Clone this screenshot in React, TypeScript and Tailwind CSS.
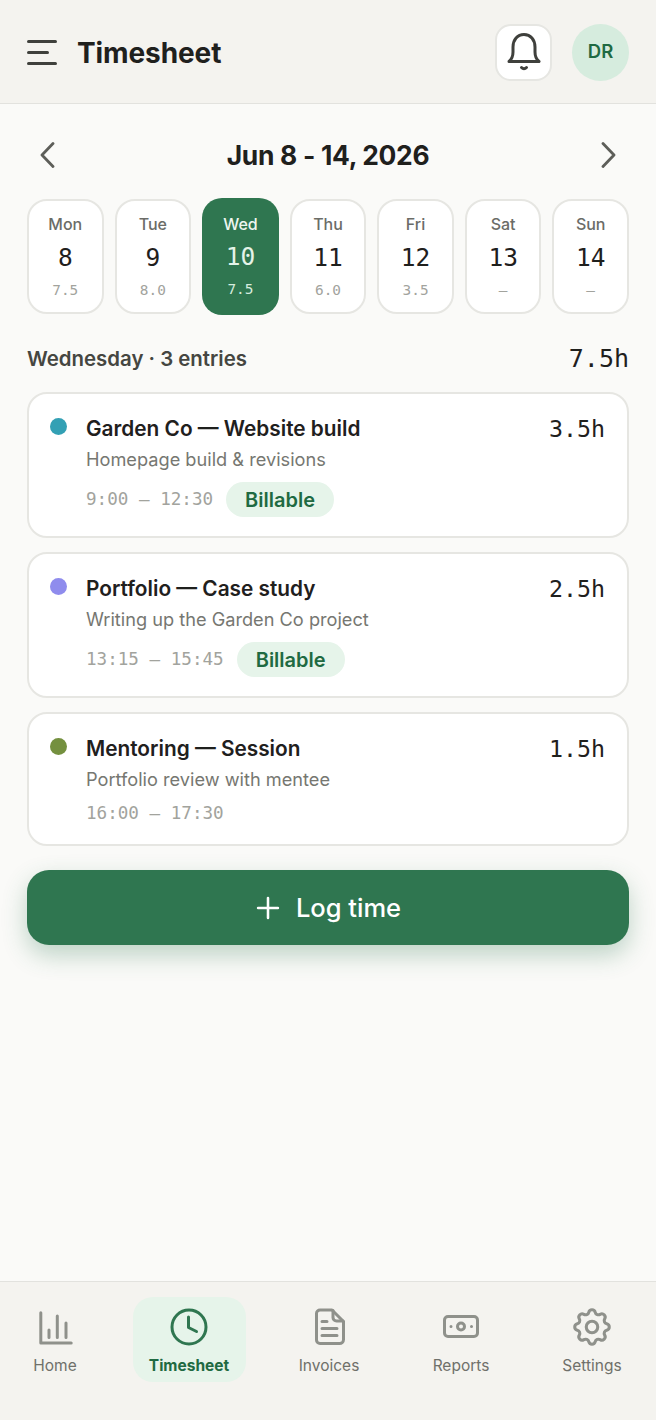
import React from "react";
import { Plus } from "lucide-react";
import { TbSettings } from "react-icons/tb";

const sans = "font-['Inter','Noto_Sans',sans-serif]";
const mono = "font-['DejaVu_Sans_Mono','Liberation_Mono',monospace]";

interface Day {
  name: string;
  num: string;
  hours: string;
  active?: boolean;
}

const days: Day[] = [
  { name: "Mon", num: "8", hours: "7.5" },
  { name: "Tue", num: "9", hours: "8.0" },
  { name: "Wed", num: "10", hours: "7.5", active: true },
  { name: "Thu", num: "11", hours: "6.0" },
  { name: "Fri", num: "12", hours: "3.5" },
  { name: "Sat", num: "13", hours: "—" },
  { name: "Sun", num: "14", hours: "—" },
];

interface Entry {
  title: string;
  note: string;
  time: string;
  hours: string;
  dot: string;
  billable: boolean;
}

const entries: Entry[] = [
  { title: "Garden Co — Website build", note: "Homepage build & revisions", time: "9:00 – 12:30", hours: "3.5h", dot: "bg-[#33a0b4]", billable: true },
  { title: "Portfolio — Case study", note: "Writing up the Garden Co project", time: "13:15 – 15:45", hours: "2.5h", dot: "bg-[#8f8ced]", billable: true },
  { title: "Mentoring — Session", note: "Portfolio review with mentee", time: "16:00 – 17:30", hours: "1.5h", dot: "bg-[#74903f]", billable: false },
];

const BellIcon = () => (
  <svg width="38" height="40" viewBox="0 0 38 40" fill="none" stroke="#3f403c" strokeWidth="3" strokeLinecap="round" strokeLinejoin="round">
    <path d="M4 29.500c3-2.500 4-5 4-9.500v-5C8 7.500 12.500 2.500 19 2.500S30 7.500 30 15v5c0 4.500 1 7 4 9.500z" />
    <path d="M16.500 35.500c1.500 1.500 3.500 1.500 5 0" />
  </svg>
);

const HomeIcon = () => (
  <svg width="36" height="36" viewBox="0 0 36 36" fill="none" stroke="#8f918b" strokeWidth="3" strokeLinecap="round" strokeLinejoin="round">
    <path d="M3.800 3.700V34h30.400" />
    <path d="M12 21v7.500M20.300 7v21.500M29 14v14.500" />
  </svg>
);

const ClockIcon = () => (
  <svg width="38" height="38" viewBox="0 0 38 38" fill="none" stroke="#2f7650" strokeWidth="3" strokeLinecap="round" strokeLinejoin="round">
    <circle cx="19" cy="19" r="17" />
    <path d="M18.500 9v10.500l8 4" />
  </svg>
);

const DocIcon = () => (
  <svg width="32" height="37" viewBox="0 0 32 37" fill="none" stroke="#8f918b" strokeWidth="3" strokeLinecap="round" strokeLinejoin="round">
    <path d="M7 2h12l11.500 11.500v18a4 4 0 0 1-4 4H7A3.500 3.500 0 0 1 3.500 32V5.500A3.500 3.500 0 0 1 7 2z" />
    <path d="M20 2.500v7a3.500 3.500 0 0 0 3.500 3.500H30" />
    <path d="M9 13.500h5M9 20.500h15M9 27.500h15" />
  </svg>
);

const CashIcon = () => (
  <svg width="36" height="23" viewBox="0 0 36 23" fill="none" stroke="#8f918b" strokeWidth="3" strokeLinecap="round" strokeLinejoin="round">
    <rect x="1.500" y="1.500" width="33" height="20" rx="3.500" />
    <circle cx="18" cy="11.500" r="3.500" />
    <path d="M8 11.500h.01M28.500 11.500h.01" />
  </svg>
);

const tabs = [
  { label: "Home", icon: <HomeIcon />, width: "w-[80px]" },
  { label: "Timesheet", icon: <ClockIcon />, width: "w-[113px]", active: true },
  { label: "Invoices", icon: <DocIcon />, width: "w-[92px]" },
  { label: "Reports", icon: <CashIcon />, width: "w-[97px]" },
  { label: "Settings", icon: <TbSettings size={46} color="#8f918b" strokeWidth={1.6} />, width: "w-[90px]" },
];

export default function App() {
  return (
    <div className={`${sans} flex h-[1420px] w-full flex-col bg-[#fafaf8] text-[#1f201d]`}>
      <header className="flex h-[104px] shrink-0 items-center border-b border-[#e2e2de] bg-[#f4f3ef] px-[27px] pt-[1px]">
        <div className="flex w-[30px] flex-col gap-[8px]">
          <span className="h-[3px] w-[30px] rounded-full bg-[#3f403c]" />
          <span className="h-[3px] w-[22px] rounded-full bg-[#3f403c]" />
          <span className="h-[3px] w-[30px] rounded-full bg-[#3f403c]" />
        </div>
        <h1 className="ml-[20px] pt-[2px] text-[28px] font-bold tracking-[-0.1px]">Timesheet</h1>
        <button className="ml-auto flex h-[57px] w-[57px] items-center justify-center rounded-[16px] border-2 border-[#e6e6e2] bg-white">
          <BellIcon />
        </button>
        <div className="ml-[20px] flex h-[57px] w-[57px] items-center justify-center rounded-full bg-[#d6ecde] text-[18.500px] font-semibold text-[#1f6a42]">
          DR
        </div>
      </header>

      <main className="flex flex-1 flex-col px-[27px]">
        <div className="mt-[33px] flex h-[36px] items-center justify-between">
          <svg width="16" height="26" viewBox="0 0 16 26" fill="none" stroke="#5d5e59" strokeWidth="2.800" strokeLinecap="round" strokeLinejoin="round" className="ml-[12px]">
            <path d="M14 1.500 3 13l11 11.500" />
          </svg>
          <div className="pt-[2px] text-[26.400px] font-bold tracking-[-0.3px]">Jun 8 - 14, 2026</div>
          <svg width="16" height="26" viewBox="0 0 16 26" fill="none" stroke="#5d5e59" strokeWidth="2.800" strokeLinecap="round" strokeLinejoin="round" className="mr-[12px]">
            <path d="M2 1.500 13 13 2 24.500" />
          </svg>
        </div>

        <div className="mt-[26px] grid grid-cols-7 gap-[11px]">
          {days.map((d) => (
            <div
              key={d.name}
              className={
                d.active
                  ? "-my-px flex h-[117px] flex-col items-center rounded-[20px] bg-[#2f7650] pt-[16px] text-white"
                  : "flex h-[115px] flex-col items-center rounded-[20px] border-2 border-[#e6e6e2] bg-white pt-[13px]"
              }
            >
              <div className={`text-[16px] font-medium leading-[20px] ${d.active ? "text-[#eef6f0]" : "text-[#6b6c67]"}`}>{d.name}</div>
              <div className={`${mono} text-[24.500px] leading-[32px] ${d.active ? "mt-[7px] text-[#e4f3e8]" : "mt-[8px] text-[#1f201d]"}`}>{d.num}</div>
              <div className={`${mono} mt-[7px] text-[14.400px] leading-[18px] ${d.active ? "text-[#d6ecde]" : "text-[#a2a39d]"}`}>{d.hours}</div>
            </div>
          ))}
        </div>

        <div className="mt-[30px] flex h-[30px] items-center justify-between">
          <div className="text-[20.400px] font-semibold text-[#454641]">Wednesday · 3 entries</div>
          <div className={`${mono} text-[25px]`}>7.5h</div>
        </div>

        <div className="mt-[18px] flex flex-col gap-[14px]">
          {entries.map((e) => (
            <div key={e.title} className="flex items-start rounded-[20px] border-2 border-[#e6e6e2] bg-white pb-[19px] pl-[21px] pr-[22px] pt-[21px]">
              <span className={`mt-[3px] h-[17px] w-[17px] shrink-0 rounded-full ${e.dot}`} />
              <div className="ml-[19px] flex-1">
                <div className="text-[20.800px] font-semibold leading-[28px]">{e.title}</div>
                <div className="mt-[3px] text-[18.200px] leading-[26px] text-[#767771]">{e.note}</div>
                <div className="mt-[10px] flex items-center gap-[13px]">
                  <span className={`${mono} text-[17.600px] leading-[23px] text-[#a2a39d]`}>{e.time}</span>
                  {e.billable && (
                    <span className="flex h-[35px] items-center rounded-full bg-[#e6f4ea] px-[19px] text-[20px] font-semibold text-[#1f6a42]">Billable</span>
                  )}
                </div>
              </div>
              <div className={`${mono} text-[23.300px] leading-[28px]`}>{e.hours}</div>
            </div>
          ))}
        </div>

        <button className="mt-[24px] flex h-[75px] w-full items-center justify-center gap-[11px] rounded-[22px] bg-[#2f7650] pr-[4px] text-[25.500px] font-medium text-white shadow-[0_10px_24px_rgba(47,118,80,0.3)]">
          <Plus size={34} strokeWidth={1.800} />
          <span className="pt-[2px]">Log time</span>
        </button>
      </main>

      <nav className="flex h-[139px] shrink-0 items-start justify-between border-t border-[#e2e2de] bg-[#f4f3ef] pl-[15px] pr-[19px] pt-[15px]">
        {tabs.map((t) => (
          <div
            key={t.label}
            className={`${t.width} flex h-[85px] flex-col items-center rounded-[20px] ${t.active ? "bg-[#e6f4ea]" : ""}`}
          >
            <div className="flex h-[59px] items-center justify-center">{t.icon}</div>
            <div className={`text-[15.500px] leading-[20px] ${t.active ? "font-bold text-[#1f6a42]" : "text-[#6f706a]"}`}>{t.label}</div>
          </div>
        ))}
      </nav>
    </div>
  );
}
